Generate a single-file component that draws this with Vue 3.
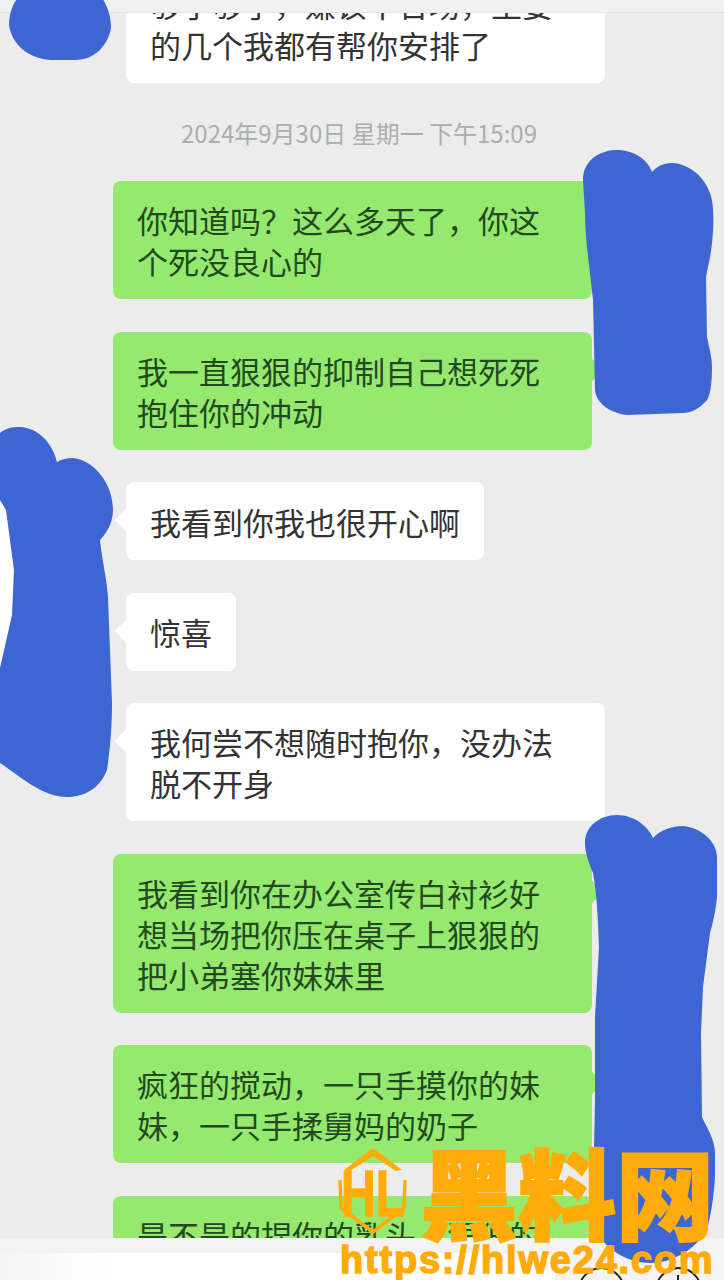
<template>
  <div class="screen">
    <div class="topbar"></div>
    <div class="chat">
      <div class="list">
        <div v-for="(msg, i) in messages" :key="i" :class="['row', msg.type]">
          <template v-if="msg.type === 'time'">{{ msg.text }}</template>
          <div v-else :class="['bubble', { wide: msg.lines.length > 1 }]">
            <p v-for="line in msg.lines" :key="line">{{ line }}</p>
          </div>
        </div>
      </div>
    </div>
    <div class="composer">
      <div class="input"></div>
      <div class="tools">
        <span class="round"></span>
        <span class="round plus"></span>
      </div>
    </div>

    <svg class="scribbles" width="724" height="1280" viewBox="0 0 724 1280">
      <path fill="#fff" d="M0 500 L6 510 L14 570 L12 615 L0 668 Z" />
      <g fill="#3d66d3">
        <path d="M9 25 C9 5 20 -10 40 -20 L85 -20 C102 -8 111 10 111 28 C108 45 95 60 75 60 L50 60 C28 58 12 45 9 25 Z" />
        <path d="M583 180 C583 160 600 150 617 150 C634 150 648 160 652 172 C658 165 665 163 673 163 C695 165 713 185 713 210 C714 222 713 233 712 243 C711 255 708 266 706 277 L707 337 C709 347 712 357 712 367 C712 385 710 395 707 400 C700 408 692 413 683 413 L627 415 C610 413 596 403 595 390 L593 300 C590 270 585 240 585 213 Z" />
        <path d="M0 433 C6 428 12 427 20 427 C38 428 52 442 57 462 C62 459 67 458 73 458 C95 460 113 485 113 510 C113 522 107 533 100 540 C102 560 107 580 108 597 L112 703 C112 728 110 750 107 770 C100 788 85 797 67 797 C42 797 20 776 0 763 L0 668 L12 615 L14 570 L6 510 L0 500 Z" />
        <path d="M585 843 C585 826 600 815 617 815 C634 815 648 826 653 838 C660 830 672 826 683 826 C702 828 717 842 717 857 L717 897 C716 910 713 922 710 933 L703 987 L701 1033 L702 1117 C707 1128 715 1140 715 1153 L715 1177 C714 1195 711 1215 707 1230 C695 1250 672 1263 650 1263 C630 1263 610 1252 600 1237 C596 1226 593 1214 593 1200 L595 1100 L595 1017 L599 947 C598 920 597 895 593 873 C589 863 585 853 585 843 Z" />
      </g>
    </svg>

    <div class="mark">
      <svg class="mark-logo" width="76" height="92" viewBox="0 0 76 92">
        <path class="hex-top" d="M37 2 L66 24 L60 25 L37 10 L14 25 L8 24 Z" />
        <path class="hex" d="M4 34 L5 62 L37 86 L68 62 L69 34" />
        <text class="logo-text" text-anchor="middle" transform="translate(37 70) scale(1 1.35)">HL</text>
      </svg>
      <span class="mark-name">黑料网</span>
      <span class="mark-dash">»»»»</span>
      <span class="mark-url">https://hlwe24.com</span>
    </div>
  </div>
</template>

<script setup>
const messages = [
  { type: "them", lines: ["够了够了，嫌该不合场，主要", "的几个我都有帮你安排了"] },
  { type: "time", text: "2024年9月30日 星期一 下午15:09" },
  { type: "me", lines: ["你知道吗？这么多天了，你这", "个死没良心的"] },
  { type: "me", lines: ["我一直狠狠的抑制自己想死死", "抱住你的冲动"] },
  { type: "them", lines: ["我看到你我也很开心啊"] },
  { type: "them", lines: ["惊喜"] },
  { type: "them", lines: ["我何尝不想随时抱你，没办法", "脱不开身"] },
  { type: "me", lines: ["我看到你在办公室传白衬衫好", "想当场把你压在桌子上狠狠的", "把小弟塞你妹妹里"] },
  { type: "me", lines: ["疯狂的搅动，一只手摸你的妹", "妹，一只手揉舅妈的奶子"] },
  { type: "me", lines: ["是不是的捏你的乳头，狠狠的"] },
];
</script>

<style scoped>
.screen {
  position: relative;
  width: 724px;
  height: 1280px;
  overflow: hidden;
  background: #ececec;
  font-family: "Noto Sans CJK SC", "Liberation Sans", sans-serif;
}

.topbar {
  height: 12px;
  background: #f1f1f1;
  border-bottom: 1px solid #e4e4e4;
}

.chat {
  height: 1225px;
  overflow: hidden;
}

.list {
  display: flex;
  flex-direction: column;
  gap: 32.5px;
  margin-top: -48px;
}

.row {
  display: flex;
}

.row.them {
  padding-left: 126px;
}

.row.me {
  padding-left: 113px;
}

.row.time {
  justify-content: center;
  align-items: center;
  height: 33px;
  padding-right: 6px;
  font-size: 24px;
  line-height: 33px;
  color: #adadad;
}

.bubble {
  position: relative;
  display: flex;
  flex-direction: column;
  justify-content: center;
  min-height: 78px;
  box-sizing: border-box;
  padding: 18px 24px;
  border-radius: 8px;
  font-size: 31px;
  line-height: 41px;
  color: #333;
  background: #fff;
}

.bubble.wide {
  width: 479px;
}

.bubble p {
  margin: 0;
  white-space: nowrap;
}

.bubble::before {
  content: "";
  position: absolute;
  top: 30px;
  left: -8px;
  width: 16px;
  height: 16px;
  background: inherit;
  transform: rotate(45deg);
}

.me .bubble {
  width: 479px;
  color: #234a1f;
  background: #96e96f;
}

.me .bubble::before {
  left: auto;
  right: -8px;
}

.composer {
  display: flex;
  height: 42px;
  padding-top: 15px;
  box-sizing: border-box;
  background: #f3f3f3;
}

.input {
  width: 555px;
  background: linear-gradient(90deg, #f5f5f5 0, #fff 110px);
}

.tools {
  display: flex;
  gap: 30px;
  padding: 14px 0 0 23px;
}

.round {
  position: relative;
  flex: none;
  width: 47px;
  height: 47px;
  box-sizing: border-box;
  border: 2px solid #222;
  border-radius: 50%;
}

.round.plus::before {
  content: "";
  position: absolute;
  top: 6px;
  left: 20px;
  width: 2px;
  height: 10px;
  background: #222;
}

.scribbles {
  position: absolute;
  top: 0;
  left: 0;
  filter: blur(0.6px);
}

.mark {
  position: absolute;
  left: 336px;
  top: 1140px;
  width: 388px;
  height: 140px;
  color: #ffac0a;
}

.mark-logo {
  position: absolute;
  left: 0;
  top: 6px;
}

.hex-top {
  fill: #ffac0a;
}

.hex {
  fill: none;
  stroke: #ffac0a;
  stroke-width: 3.5;
}

.logo-text {
  fill: #ffac0a;
  stroke: #ffac0a;
  stroke-width: 1;
  font-family: "Liberation Sans", sans-serif;
  font-size: 48px;
  font-weight: 700;
}

.mark-name {
  position: absolute;
  left: 84px;
  top: -16px;
  font-size: 98px;
  line-height: 130px;
  font-weight: 900;
  white-space: nowrap;
  -webkit-text-stroke: 2px #ffac0a;
}

.mark-dash {
  position: absolute;
  left: 238px;
  top: 58px;
  font-family: "Liberation Sans", sans-serif;
  font-size: 15px;
  line-height: 20px;
  letter-spacing: -1px;
  opacity: 0.75;
}

.mark-url {
  position: absolute;
  left: 4px;
  top: 100px;
  font-family: "Liberation Sans", sans-serif;
  font-size: 38px;
  line-height: 40px;
  font-weight: 700;
  letter-spacing: 1.8px;
  white-space: nowrap;
  -webkit-text-stroke: 1.5px #ffac0a;
}
</style>
